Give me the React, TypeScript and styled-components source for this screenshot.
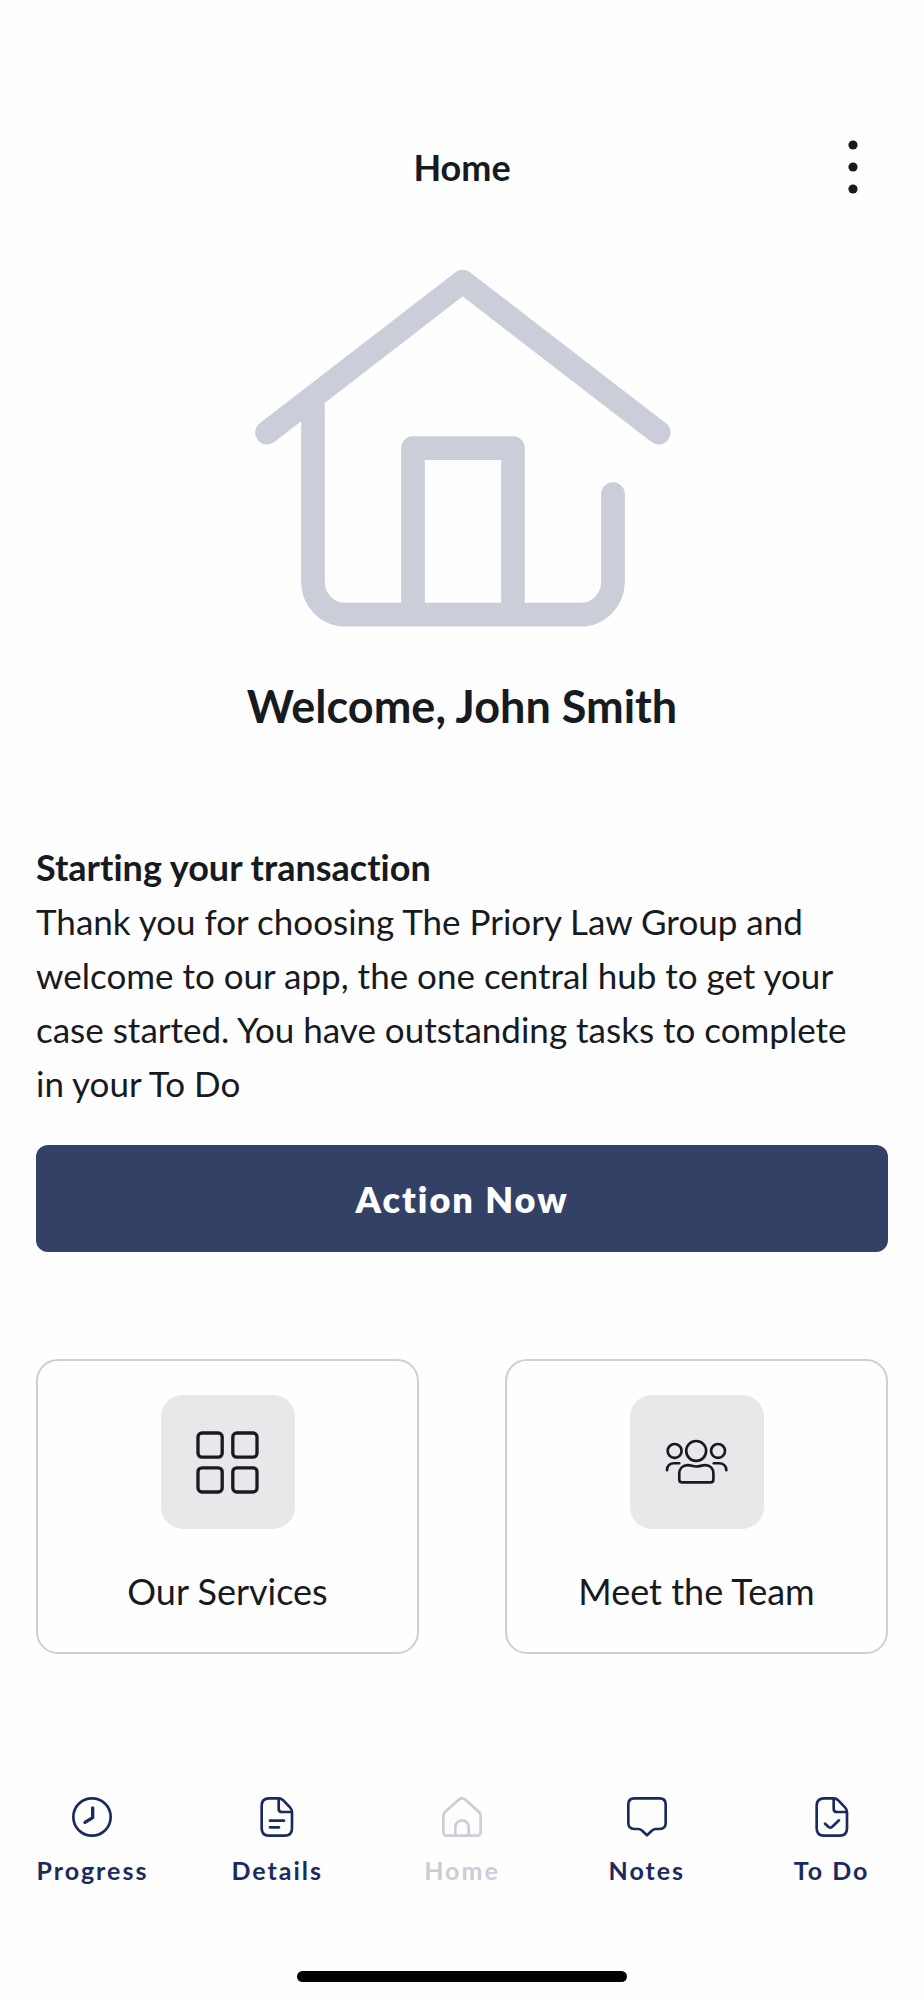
import React from "react";
import styled, { createGlobalStyle } from "styled-components";

const colors = {
  page: "#fefefe",
  ink: "#171a1f",
  navy: "#1b2b5e",
  button: "#334166",
  muted: "#cbcdd9",
  tile: "#e8e8ea",
  border: "#cfcfcf",
};

const GlobalStyle = createGlobalStyle`
  *, *::before, *::after { box-sizing: border-box; }
  body {
    margin: 0;
    background: ${colors.page};
    color: ${colors.ink};
    font-family: Lato, "Liberation Sans", sans-serif;
    font-size: 36px;
    line-height: 54px;
    font-variant-ligatures: none;
  }
  button { font: inherit; color: inherit; border: 0; background: none; padding: 0; cursor: pointer; }
  a { color: inherit; text-decoration: none; }
  h1, h2, p { margin: 0; font-size: inherit; }
  svg { display: block; fill: none; stroke: currentColor; stroke-linecap: round; stroke-linejoin: round; }
`;

const Screen = styled.div`
  min-height: 100vh;
  display: flex;
  flex-direction: column;
`;

const Header = styled.header`
  display: grid;
  grid-template-columns: 1fr auto 1fr;
  align-items: center;
  padding: 120px 36px 0;
  height: 214px;
`;

const Title = styled.h1`
  grid-column: 2;
  font-weight: 700;
`;

const MenuButton = styled.button`
  justify-self: end;
  display: grid;
  place-items: center;
  width: 70px;
  height: 70px;
  svg { width: 10px; height: 54px; fill: currentColor; stroke: none; }
`;

const Content = styled.main`
  display: flex;
  flex-direction: column;
  padding: 55px 36px 0;
`;

const Hero = styled.section`
  display: flex;
  flex-direction: column;
  align-items: center;
  gap: 47px;
  svg { width: 418px; max-width: 100%; height: auto; color: ${colors.muted}; }
`;

const Welcome = styled.h2`
  && { font-size: 45px; }
  line-height: 64px;
  font-weight: 700;
  text-align: center;
`;

const Message = styled.section`
  margin-top: 102px;
`;

const MessageTitle = styled.h2`
  font-weight: 700;
`;

const MessageText = styled.p`
  && { font-size: 35px; }
  padding-right: 24px;
`;

const ActionButton = styled.button`
  && {
    margin-top: 35px;
    min-height: 107px;
    border-radius: 12px;
    background: ${colors.button};
    color: #fff;
    font-weight: 800;
    letter-spacing: 2px;
  }
`;

const Cards = styled.section`
  display: grid;
  grid-template-columns: 1fr 1fr;
  gap: 86px;
  margin-top: 107px;
`;

const Card = styled.button`
  && {
    display: flex;
    flex-direction: column;
    align-items: center;
    gap: 35px;
    padding: 34px 12px;
    border: 2px solid ${colors.border};
    border-radius: 22px;
  }
`;

const IconTile = styled.span`
  display: grid;
  place-items: center;
  width: 134px;
  height: 134px;
  border-radius: 22px;
  background: ${colors.tile};
  svg { width: 63px; }
`;

const Nav = styled.nav`
  display: flex;
  margin-top: auto;
  padding-top: 60px;
`;

const NavItem = styled.a<{ $active?: boolean }>`
  flex: 1 1 0;
  display: flex;
  flex-direction: column;
  align-items: center;
  gap: 15px;
  color: ${(p) => (p.$active ? colors.muted : colors.navy)};
  font-size: 25px;
  line-height: 36px;
  font-weight: 700;
  letter-spacing: 2px;
  svg { width: 40px; height: 40px; stroke-width: 8; }
`;

const HomeIndicator = styled.div`
  align-self: center;
  width: 330px;
  height: 11px;
  margin: 83px 0 18px;
  border-radius: 6px;
  background: #000;
`;

const DotsIcon = () => (
  <svg viewBox="0 0 10 54" aria-hidden="true">
    <circle cx="5" cy="5" r="4.6" />
    <circle cx="5" cy="27" r="4.6" />
    <circle cx="5" cy="49" r="4.6" />
  </svg>
);

const HouseDrawing = () => (
  <svg viewBox="39 58 1254 1074" strokeWidth="71" aria-hidden="true">
    <path d="M81 549 668 95.500 1256 549" />
    <path d="M219 470V996C219 1050 262 1095 316 1095H1022C1076 1095 1119 1050 1119 996V733" />
    <path d="M519 1090V595.500H819V1090" />
  </svg>
);

const GridIcon = () => (
  <svg viewBox="528 271 190 190" strokeWidth="10" aria-hidden="true">
    <rect x="534" y="277" width="73" height="73" rx="12" />
    <rect x="639" y="277" width="73" height="73" rx="12" />
    <rect x="534" y="382" width="73" height="73" rx="12" />
    <rect x="639" y="382" width="73" height="73" rx="12" />
  </svg>
);

const TeamIcon = () => (
  <svg viewBox="524 297 190 138" strokeWidth="8" aria-hidden="true">
    <circle cx="618" cy="333" r="30" />
    <circle cx="553" cy="333" r="21" />
    <circle cx="684" cy="333" r="21" />
    <path d="M530 391C530 378 539 370 552 370H567" />
    <path d="M671 370H686C699 370 709 378 709 391" />
    <path d="M567 419V402C567 386 578 376 593 376C603 376 607 380 618 380S634 376 645 376C660 376 670 386 670 402V419Q670 428 661 428H576Q567 428 567 419Z" />
  </svg>
);

const ClockIcon = () => (
  <svg viewBox="0 0 120 120" aria-hidden="true">
    <circle cx="60" cy="60" r="56" />
    <path d="M62 33V62L39 76" strokeWidth="10" />
  </svg>
);

const PageOutline = () => (
  <>
    <path d="M36 4H64Q73 4 79 10L99 31Q105 37 105 46V94Q105 116 83 116H36Q14 116 14 94V26Q14 4 36 4Z" />
    <path d="M65 6V35Q65 45 75 45H104" />
  </>
);

const DetailsIcon = () => (
  <svg viewBox="0 0 120 120" aria-hidden="true">
    <PageOutline />
    <path d="M39 71H81M39 91H66" />
  </svg>
);

const TodoIcon = () => (
  <svg viewBox="0 0 120 120" aria-hidden="true">
    <PageOutline />
    <path d="M39 80L50 90Q55 94 60 90L81 70" />
  </svg>
);

const HomeIcon = () => (
  <svg viewBox="0 0 120 120" aria-hidden="true">
    <path d="M4 57Q4 50 9 45L49 9Q60 -1 71 9L111 45Q116 50 116 57V104Q116 116 104 116H16Q4 116 4 104Z" />
    <path d="M40 115V90A20 20 0 0 1 80 90V115" />
  </svg>
);

const NotesIcon = () => (
  <svg viewBox="0 0 120 120" aria-hidden="true">
    <path d="M22 4H98Q116 4 116 22V78Q116 96 98 96H86Q80 96 76 100L60 115L44 100Q40 96 34 96H22Q4 96 4 78V22Q4 4 22 4Z" />
  </svg>
);

const navItems = [
  { label: "Progress", href: "#progress", Icon: ClockIcon },
  { label: "Details", href: "#details", Icon: DetailsIcon },
  { label: "Home", href: "#home", Icon: HomeIcon, active: true },
  { label: "Notes", href: "#notes", Icon: NotesIcon },
  { label: "To Do", href: "#todo", Icon: TodoIcon },
];

const cards = [
  { label: "Our Services", Icon: GridIcon },
  { label: "Meet the Team", Icon: TeamIcon },
];

export default function App() {
  return (
    <Screen>
      <GlobalStyle />
      <Header>
        <Title>Home</Title>
        <MenuButton type="button" aria-label="Menu">
          <DotsIcon />
        </MenuButton>
      </Header>
      <Content>
        <Hero>
          <HouseDrawing />
          <Welcome>Welcome, John Smith</Welcome>
        </Hero>
        <Message>
          <MessageTitle>Starting your transaction</MessageTitle>
          <MessageText>
            Thank you for choosing The Priory Law Group and welcome to our app, the one central
            hub to get your case started. You have outstanding tasks to complete in your To Do
          </MessageText>
        </Message>
        <ActionButton type="button">Action Now</ActionButton>
        <Cards>
          {cards.map(({ label, Icon }) => (
            <Card type="button" key={label}>
              <IconTile>
                <Icon />
              </IconTile>
              <span>{label}</span>
            </Card>
          ))}
        </Cards>
      </Content>
      <Nav aria-label="Main">
        {navItems.map(({ label, href, Icon, active }) => (
          <NavItem key={label} href={href} $active={active} aria-current={active ? "page" : undefined}>
            <Icon />
            <span>{label}</span>
          </NavItem>
        ))}
      </Nav>
      <HomeIndicator />
    </Screen>
  );
}
